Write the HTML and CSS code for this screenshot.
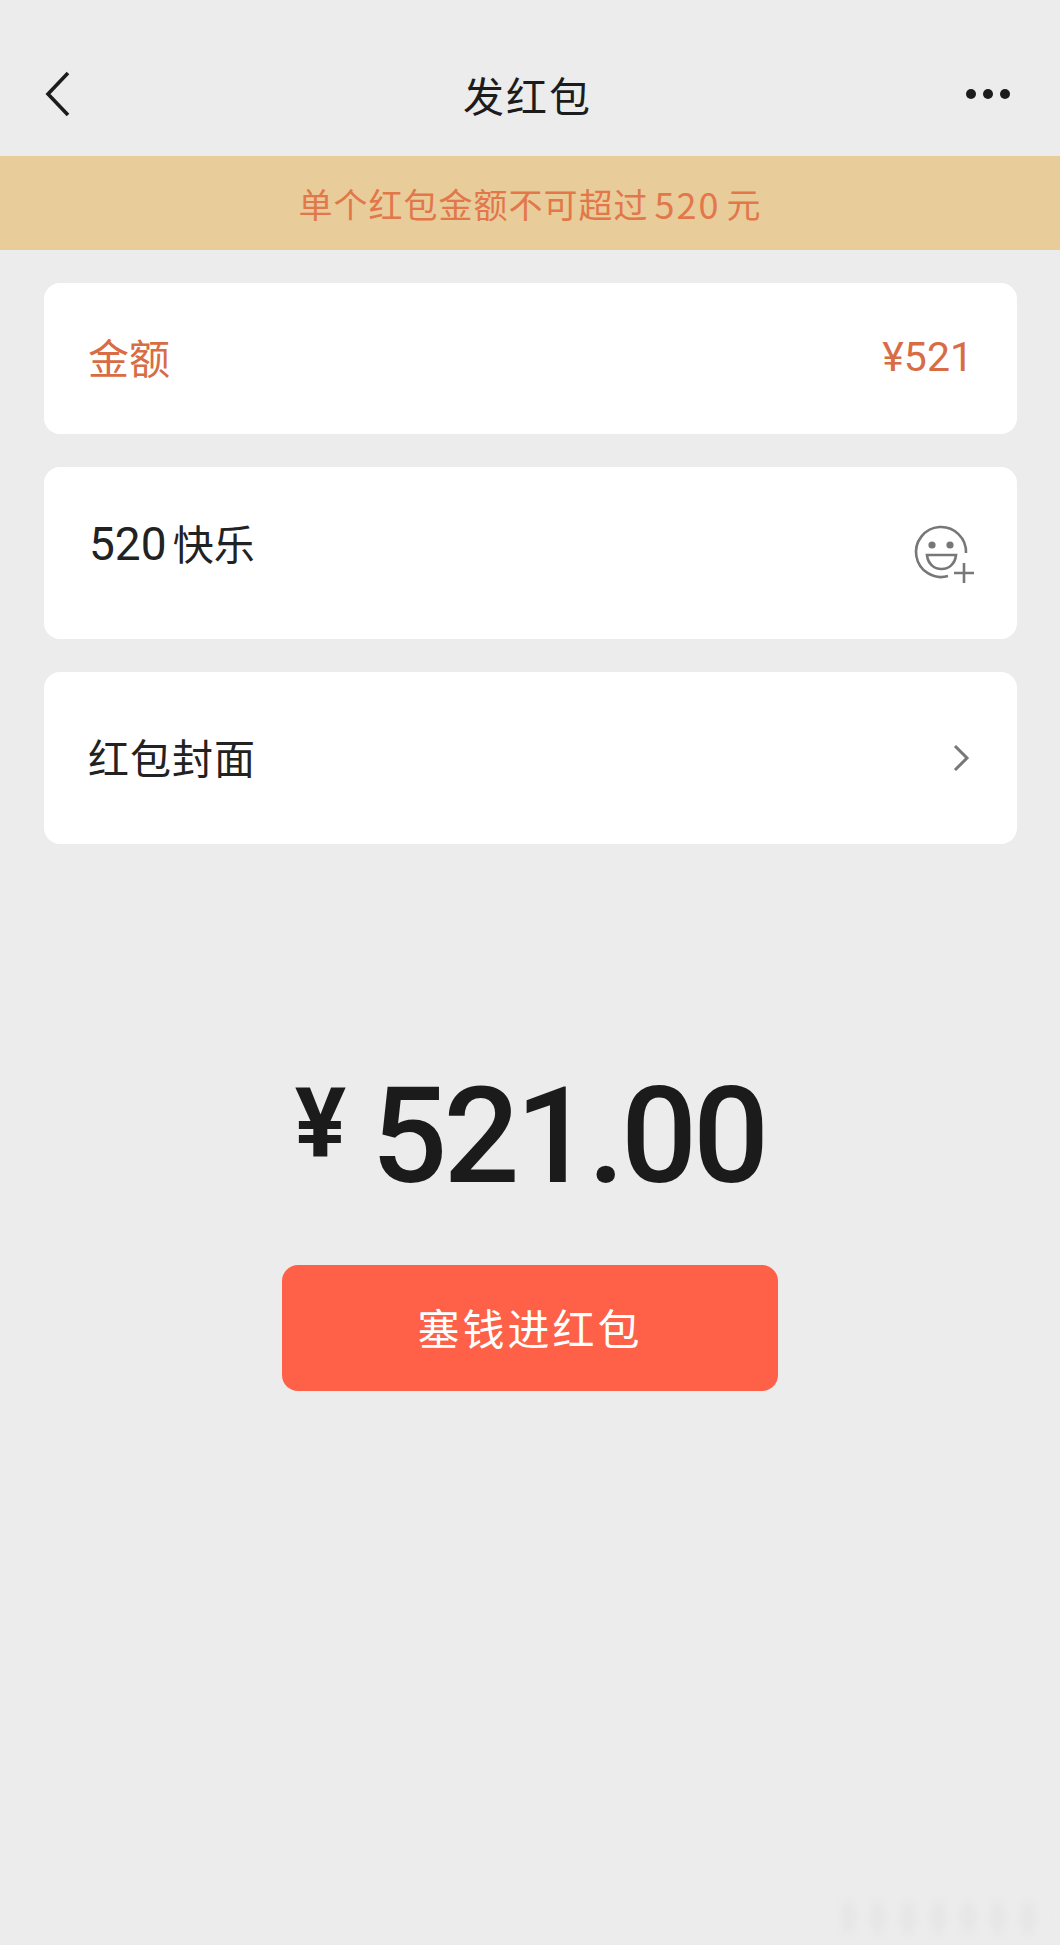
FILE: index.html
```html
<!DOCTYPE html>
<html lang="zh-CN">
<head>
    <meta charset="UTF-8">
    <meta name="viewport" content="width=device-width, initial-scale=1.0">
    <title>发红包</title>
    <link rel="stylesheet" href="styles.css">
</head>
<body>
    <!-- Top bar -->
    <header class="topbar">
        <svg class="back-icon" width="26" height="46" viewBox="0 0 26 46">
            <path d="M23 2 L3 23 L23 44" fill="none" stroke="#1c1c1c" stroke-width="3.6"/>
        </svg>
        <div class="topbar-title">发红包</div>
        <div class="more-dots">
            <span class="dot"></span>
            <span class="dot"></span>
            <span class="dot"></span>
        </div>
    </header>

    <!-- Warning banner -->
    <div class="banner">单个红包金额不可超过 <span class="banner-num">520</span> 元</div>

    <!-- Form cards -->
    <main class="cards">
        <div class="card card-amount">
            <span class="card-label">金额</span>
            <span class="card-value">¥521</span>
        </div>
        <div class="card card-message">
            <span class="message-text"><span class="message-num">520</span> 快乐</span>
            <svg class="emoji-icon" width="64" height="64" viewBox="0 0 64 64">
                <path d="M53 31 A25 25 0 1 0 35 54" fill="none" stroke="#777" stroke-width="2.6"/>
                <circle cx="19" cy="23" r="3.6" fill="#777"/>
                <circle cx="37" cy="23" r="3.6" fill="#777"/>
                <path d="M14 33 H43 C42 42 36 47 28.5 47 C21 47 15 42 14 33 Z" fill="none" stroke="#777" stroke-width="2.6"/>
                <path d="M41 51 H61 M51 41 V61" fill="none" stroke="#777" stroke-width="2.6"/>
            </svg>
        </div>
        <div class="card card-cover">
            <span class="card-title">红包封面</span>
            <svg class="arrow-icon" width="17" height="28" viewBox="0 0 17 28">
                <path d="M2 2 L14 14 L2 26" fill="none" stroke="#777" stroke-width="3"/>
            </svg>
        </div>
    </main>

    <!-- Total -->
    <section class="total">
        <div class="total-amount">
            <span class="total-yen">¥</span>
            <span class="total-num">521.00</span>
        </div>
        <button class="submit-btn">塞钱进红包</button>
    </section>

    <!-- Faint watermark bottom right -->
    <div class="watermark"></div>
</body>
</html>
```

FILE: styles.css
```css
* {
    margin: 0;
    padding: 0;
    box-sizing: border-box;
}

body {
    font-family: "Noto Sans CJK SC", "Noto Sans", sans-serif;
    background: #ececec;
    height: 1945px;
    position: relative;
    overflow: hidden;
}

/* Top bar */
.topbar {
    height: 156px;
    padding: 32px 50px 0 45px;
    display: grid;
    grid-template-columns: 1fr auto 1fr;
    align-items: center;
}

.topbar-title {
    font-size: 41px;
    line-height: 64px;
    letter-spacing: 2px;
    color: #1c1c1c;
}

.more-dots {
    display: flex;
    justify-content: flex-end;
    gap: 7px;
}

.dot {
    width: 10px;
    height: 10px;
    border-radius: 50%;
    background: #1c1c1c;
}

/* Banner */
.banner {
    height: 94px;
    background: #e8cc9a;
    color: #e2774a;
    font-size: 34px;
    letter-spacing: 1px;
    word-spacing: -3px;
    display: flex;
    gap: 6px;
    align-items: center;
    justify-content: center;
}

.banner-num {
    font-size: 36px;
    letter-spacing: 2px;
}

/* Cards */
.cards {
    margin: 33px 43px 0 44px;
    display: flex;
    flex-direction: column;
    gap: 33px;
}

.card {
    background: #fff;
    border-radius: 16px;
    padding: 0 46px 0 44px;
    display: flex;
    justify-content: space-between;
    align-items: center;
    height: 172px;
}

.card-amount {
    height: 151px;
    padding-right: 44px;
    padding-bottom: 6px;
    color: #d86c45;
}

.card-label {
    font-size: 41px;
}

.card-value {
    font-family: "Roboto", sans-serif;
    font-size: 41px;
    margin-top: 2px;
}

.card-message {
    align-items: flex-start;
    padding: 0 40px 0 45px;
    color: #222;
}

.message-text {
    font-size: 41px;
    line-height: 60px;
    margin-top: 45px;
    word-spacing: -3px;
}

.message-num {
    font-family: "Roboto", sans-serif;
    font-size: 46px;
}

.emoji-icon {
    margin-top: 55px;
}

.card-cover {
    padding-right: 47px;
    padding-bottom: 4px;
    color: #222;
}

.card-title {
    font-size: 41px;
    letter-spacing: 1px;
}

.arrow-icon {
    margin-top: 4px;
}

/* Total */
.total {
    margin-top: 210px;
    display: flex;
    flex-direction: column;
    align-items: center;
}

.total-amount {
    display: flex;
    align-items: flex-start;
    gap: 25px;
    height: 211px;
    color: #1b1b1b;
    font-family: "Roboto", sans-serif;
    font-weight: 500;
}

.total-yen {
    font-size: 96px;
    line-height: 112px;
    font-weight: 700;
    margin-top: 13px;
}

.total-num {
    font-size: 134px;
    line-height: 162px;
    letter-spacing: -4px;
    margin-top: 2px;
}

.submit-btn {
    width: 496px;
    height: 126px;
    padding-bottom: 4px;
    border: none;
    border-radius: 16px;
    background: #ff6148;
    color: #fff;
    font-family: inherit;
    font-size: 42px;
    letter-spacing: 3px;
}

/* Watermark */
.watermark {
    position: absolute;
    left: 842px;
    top: 1902px;
    width: 208px;
    height: 32px;
    background: repeating-linear-gradient(90deg, #e2e2e2 0 12px, #ececec 12px 30px);
    filter: blur(4px);
    opacity: 0.6;
}
```
